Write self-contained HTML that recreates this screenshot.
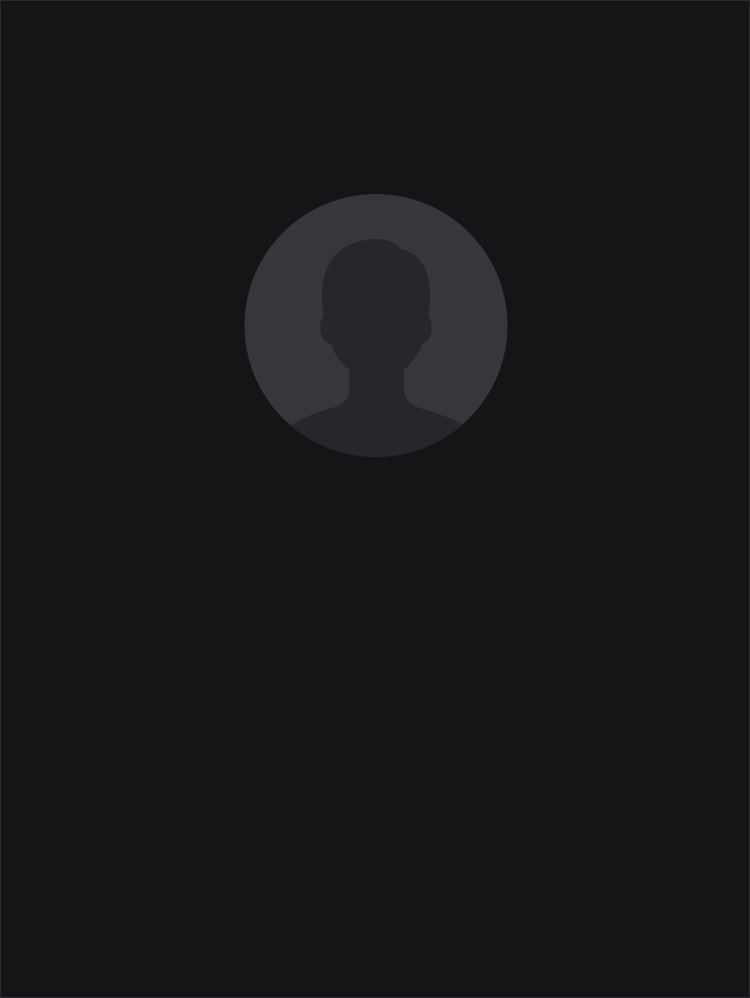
<!DOCTYPE html><html><head><style>
html,body{margin:0;padding:0;background:#141517;}
.page{width:748px;height:996px;border:1px solid #2a2b2e;background:#141517;position:relative;overflow:visible}
svg{position:absolute;left:-1px;top:-1px}
</style></head><body><div class="page">
<svg width="750" height="998" viewBox="0 0 750 998">
<defs><clipPath id="c"><circle cx="376" cy="325.5" r="131.5"/></clipPath></defs>
<circle cx="376" cy="325.5" r="131.5" fill="#36373b"/>
<g clip-path="url(#c)" fill="#26272b">
<path d="M376 239 C390 239 397 244 401 249 C420 253 430 270 430 295 C430 305 429 312 428 316 C433 320 433 335 428 340 C426 342 424 343 422 344 C419 354 412 363 404 370 L404 390 C404 400 412 405 420 408 C438 414 455 418 470 430 L470 470 L280 470 L288 428 C300 418 315 413 332 408 C342 405 349 400 349 390 L349 370 C341 363 334 354 331 344 C328 343 326 342 324 340 C319 335 319 320 324 316 C323 312 322 305 322 295 C322 262 340 240 376 239 Z"/>
</g>
</svg>
</div></body></html>
